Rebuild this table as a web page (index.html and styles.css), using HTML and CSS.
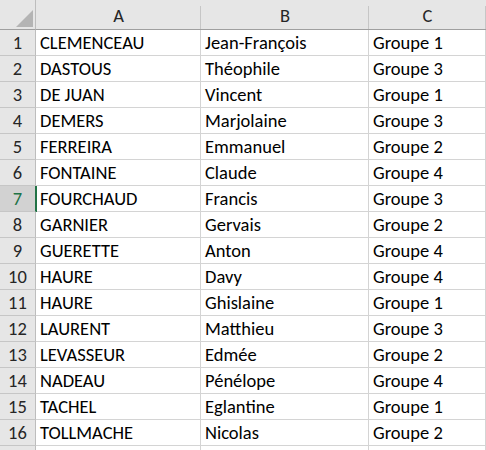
FILE: index.html
```html
<!DOCTYPE html>
<html lang="fr">
<head>
<meta charset="utf-8">
<link rel="stylesheet" href="styles.css">
</head>
<body>
<div class="sheet">
  <div class="corner">
    <svg class="corner-tri" width="35" height="29" viewBox="0 0 35 29"><polygon points="33,10 33,27 16,27" fill="#b4b4b4"/></svg>
  </div>
  <div class="colhead">A</div>
  <div class="colhead">B</div>
  <div class="colhead">C</div>

  <div class="rowhead">1</div><div class="cell">CLEMENCEAU</div><div class="cell">Jean-François</div><div class="cell">Groupe 1</div>
  <div class="rowhead">2</div><div class="cell">DASTOUS</div><div class="cell">Théophile</div><div class="cell">Groupe 3</div>
  <div class="rowhead">3</div><div class="cell">DE JUAN</div><div class="cell">Vincent</div><div class="cell">Groupe 1</div>
  <div class="rowhead">4</div><div class="cell">DEMERS</div><div class="cell">Marjolaine</div><div class="cell">Groupe 3</div>
  <div class="rowhead">5</div><div class="cell">FERREIRA</div><div class="cell">Emmanuel</div><div class="cell">Groupe 2</div>
  <div class="rowhead">6</div><div class="cell">FONTAINE</div><div class="cell">Claude</div><div class="cell">Groupe 4</div>
  <div class="rowhead selected">7</div><div class="cell">FOURCHAUD</div><div class="cell">Francis</div><div class="cell">Groupe 3</div>
  <div class="rowhead">8</div><div class="cell">GARNIER</div><div class="cell">Gervais</div><div class="cell">Groupe 2</div>
  <div class="rowhead">9</div><div class="cell">GUERETTE</div><div class="cell">Anton</div><div class="cell">Groupe 4</div>
  <div class="rowhead">10</div><div class="cell">HAURE</div><div class="cell">Davy</div><div class="cell">Groupe 4</div>
  <div class="rowhead">11</div><div class="cell">HAURE</div><div class="cell">Ghislaine</div><div class="cell">Groupe 1</div>
  <div class="rowhead">12</div><div class="cell">LAURENT</div><div class="cell">Matthieu</div><div class="cell">Groupe 3</div>
  <div class="rowhead">13</div><div class="cell">LEVASSEUR</div><div class="cell">Edmée</div><div class="cell">Groupe 2</div>
  <div class="rowhead">14</div><div class="cell">NADEAU</div><div class="cell">Pénélope</div><div class="cell">Groupe 4</div>
  <div class="rowhead">15</div><div class="cell">TACHEL</div><div class="cell">Eglantine</div><div class="cell">Groupe 1</div>
  <div class="rowhead">16</div><div class="cell">TOLLMACHE</div><div class="cell">Nicolas</div><div class="cell">Groupe 2</div>
  <div class="rowhead"></div><div class="cell"></div><div class="cell"></div><div class="cell"></div>
</div>
</body>
</html>
```
FILE: styles.css
```css
html, body {
  margin: 0;
  padding: 0;
  background: #ffffff;
  overflow: hidden;
}

.sheet {
  display: grid;
  grid-template-columns: 36px 165px 168px 1fr;
  grid-auto-rows: 26px;
  grid-template-rows: 30px;
  width: 486px;
  font-family: Carlito, Calibri, "Liberation Sans", sans-serif;
  font-size: 18.5px;
  color: #000000;
}

.corner {
  background: #e6e6e6;
  border-right: 1px solid #bdbdbd;
  border-bottom: 1px solid #9f9f9f;
  box-sizing: border-box;
}

.corner-tri {
  display: block;
}

.colhead {
  box-sizing: border-box;
  background: linear-gradient(#c6c6c6, #c6c6c6) right bottom / 1px 23px no-repeat, #e6e6e6;
  border-bottom: 1px solid #9f9f9f;
  text-align: center;
  line-height: 31px;
  color: #262626;
}

.rowhead {
  box-sizing: border-box;
  background: #e6e6e6;
  border-right: 1px solid #bdbdbd;
  border-bottom: 1px solid #c6c6c6;
  text-align: center;
  line-height: 26px;
  color: #262626;
}

.rowhead.selected {
  position: relative;
  z-index: 1;
  background: #d2d2d2;
  color: #217346;
  border-right-color: #217346;
  box-shadow: 1px 0 0 #217346;
}

.cell {
  box-sizing: border-box;
  border-right: 1px solid #d4d4d4;
  border-bottom: 1px solid #d4d4d4;
  padding-left: 4px;
  line-height: 26px;
  white-space: nowrap;
  overflow: hidden;
}
```
